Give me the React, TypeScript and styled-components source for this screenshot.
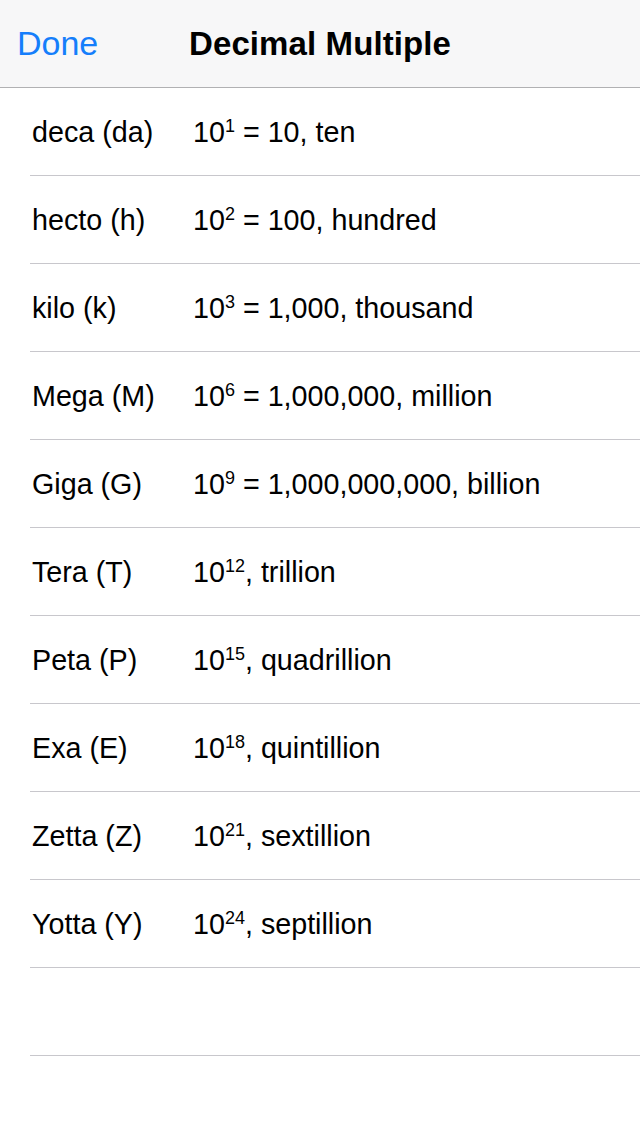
import React from "react";
import styled, { createGlobalStyle } from "styled-components";

const Global = createGlobalStyle`
  html, body { margin: 0; padding: 0; background: #ffffff; }
  body { font-family: "Liberation Sans", Arial, sans-serif; color: #000; }
`;

const Page = styled.div`
  width: 640px;
  min-height: 1136px;
  background: #ffffff;
`;

const NavBar = styled.header`
  height: 88px;
  box-sizing: border-box;
  background: #f7f7f8;
  border-bottom: 1px solid #b1b1b3;
  display: grid;
  grid-template-columns: 1fr auto 1fr;
  align-items: center;
  padding: 0 17px;
`;

const DoneButton = styled.button`
  justify-self: start;
  background: none;
  border: none;
  padding: 0;
  font-family: "Liberation Sans", Arial, sans-serif;
  font-size: 34px;
  color: #157efb;
  cursor: pointer;
`;

const Title = styled.h1`
  margin: 0;
  font-size: 33px;
  font-weight: 700;
  letter-spacing: 0.1px;
`;

const List = styled.ul`
  list-style: none;
  margin: 0;
  padding: 0;
`;

const Row = styled.li`
  margin-left: 30px;
  height: 88px;
  box-sizing: border-box;
  border-bottom: 1px solid #c8c7cc;
  display: grid;
  grid-template-columns: 161px 1fr;
  align-items: center;
  padding-left: 2px;
  padding-top: 2px;
  font-size: 28.7px;
`;

const Prefix = styled.span``;

const Value = styled.span``;

const Sup = styled.sup`
  font-size: 18px;
  vertical-align: 10px;
  line-height: 0;
`;

const rows: { prefix: string; exp: string; rest: string }[] = [
  { prefix: "deca (da)", exp: "1", rest: " = 10, ten" },
  { prefix: "hecto (h)", exp: "2", rest: " = 100, hundred" },
  { prefix: "kilo (k)", exp: "3", rest: " = 1,000, thousand" },
  { prefix: "Mega (M)", exp: "6", rest: " = 1,000,000, million" },
  { prefix: "Giga (G)", exp: "9", rest: " = 1,000,000,000, billion" },
  { prefix: "Tera (T)", exp: "12", rest: ", trillion" },
  { prefix: "Peta (P)", exp: "15", rest: ", quadrillion" },
  { prefix: "Exa (E)", exp: "18", rest: ", quintillion" },
  { prefix: "Zetta (Z)", exp: "21", rest: ", sextillion" },
  { prefix: "Yotta (Y)", exp: "24", rest: ", septillion" },
];

export default function App() {
  return (
    <Page>
      <Global />
      <NavBar>
        <DoneButton>Done</DoneButton>
        <Title>Decimal Multiple</Title>
        <span />
      </NavBar>
      <List>
        {rows.map((r) => (
          <Row key={r.prefix}>
            <Prefix>{r.prefix}</Prefix>
            <Value>
              10<Sup>{r.exp}</Sup>
              {r.rest}
            </Value>
          </Row>
        ))}
        <Row />
      </List>
    </Page>
  );
}
